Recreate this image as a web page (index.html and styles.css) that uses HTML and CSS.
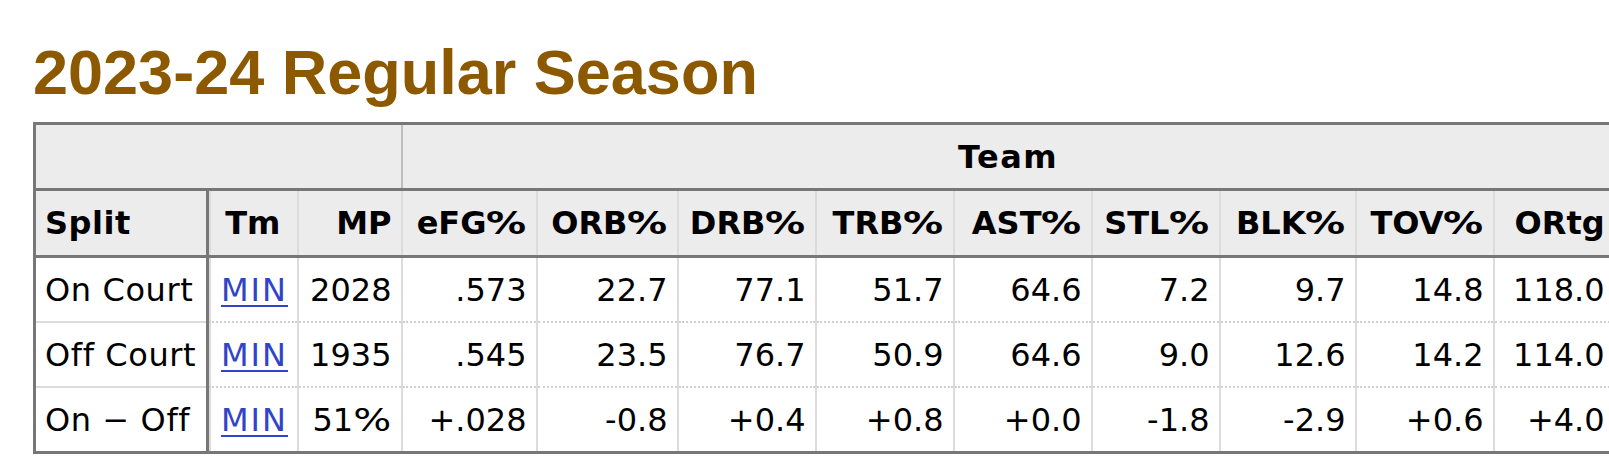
FILE: index.html
```html
<!DOCTYPE html>
<html lang="en">
<head>
<meta charset="utf-8">
<title>2023-24 Regular Season</title>
<link rel="stylesheet" href="styles.css">
</head>
<body>
<div class="page">
  <h2 class="title">2023-24 Regular Season</h2>
  <div class="table-wrap">
    <table class="stats">
      <colgroup>
        <col class="c-split"><col class="c-tm"><col class="c-mp">
        <col class="c-efg"><col class="c-orb"><col class="c-drb"><col class="c-trb">
        <col class="c-ast"><col class="c-stl"><col class="c-blk"><col class="c-tov"><col class="c-ortg">
      </colgroup>
      <thead>
        <tr class="over">
          <th colspan="3" class="blank"></th>
          <th colspan="9" class="group">Team</th>
        </tr>
        <tr class="heads">
          <th class="left split">Split</th>
          <th class="center tm">Tm</th>
          <th>MP</th>
          <th>eFG<span class="pct">%</span></th>
          <th>ORB<span class="pct">%</span></th>
          <th>DRB<span class="pct">%</span></th>
          <th>TRB<span class="pct">%</span></th>
          <th>AST<span class="pct">%</span></th>
          <th>STL<span class="pct">%</span></th>
          <th>BLK<span class="pct">%</span></th>
          <th>TOV<span class="pct">%</span></th>
          <th>ORtg</th>
        </tr>
      </thead>
      <tbody>
        <tr>
          <th class="left split">On Court</th>
          <td class="left tm"><a href="#">MIN</a></td>
          <td>2028</td><td>.573</td><td>22.7</td><td>77.1</td><td>51.7</td><td>64.6</td><td>7.2</td><td>9.7</td><td>14.8</td><td>118.0</td>
        </tr>
        <tr>
          <th class="left split">Off Court</th>
          <td class="left tm"><a href="#">MIN</a></td>
          <td>1935</td><td>.545</td><td>23.5</td><td>76.7</td><td>50.9</td><td>64.6</td><td>9.0</td><td>12.6</td><td>14.2</td><td>114.0</td>
        </tr>
        <tr>
          <th class="left split">On − Off</th>
          <td class="left tm"><a href="#">MIN</a></td>
          <td>51<span class="pct">%</span></td><td>+.028</td><td>-0.8</td><td>+0.4</td><td>+0.8</td><td>+0.0</td><td>-1.8</td><td>-2.9</td><td>+0.6</td><td>+4.0</td>
        </tr>
      </tbody>
    </table>
  </div>
</div>
</body>
</html>
```

FILE: styles.css
```css
html, body {
  margin: 0;
  padding: 0;
  background: #ffffff;
}

.page {
  padding: 36px 0 0 33px;
  overflow: hidden;
}

.title {
  margin: 0 0 14px 0;
  font-family: "Liberation Sans", Arial, sans-serif;
  font-weight: bold;
  font-size: 63px;
  line-height: 72px;
  color: #8c5800;
}

.table-wrap {
  overflow: hidden;
}

.stats {
  border-collapse: collapse;
  table-layout: fixed;
  width: 1580px;
  font-family: "DejaVu Sans", Verdana, sans-serif;
  font-size: 32px;
  color: #000;
  border-top: 3px solid #777;
  border-left: 3px solid #777;
  border-bottom: 3px solid #777;
}

.c-split { width: 173px; }
.c-tm { width: 90px; }
.c-mp { width: 104px; }
.c-efg { width: 135px; }
.c-orb { width: 141px; }
.c-drb { width: 138px; }
.c-trb { width: 138px; }
.c-ast { width: 138px; }
.c-stl { width: 128px; }
.c-blk { width: 136px; }
.c-tov { width: 138px; }
.c-ortg { width: 121px; }

.stats th,
.stats td {
  height: 63px;
  padding: 0 9px;
  text-align: right;
  vertical-align: middle;
  white-space: nowrap;
  border-left: 2px solid #dcdcdc;
  border-right: 2px solid #dcdcdc;
}

.stats thead th {
  background: #ececec;
  font-weight: bold;
}

.stats .over th {
  height: 63px;
}

.stats .heads th {
  height: 64px;
}

.stats .over .blank {
  border-right: 2px solid #bdbdbd;
}

.stats .over .group {
  text-align: center;
  letter-spacing: 1.5px;
}

.stats .heads th {
  border-top: 3px solid #777;
  border-bottom: 3px solid #777;
}

.pct {
  display: inline-block;
  margin-left: 4px;
  margin-right: 4px;
  transform: scaleX(1.25);
}

.stats tbody td {
  border-top: 2px dotted #cfcfcf;
}

.stats tbody th {
  font-weight: normal;
  background: #fff;
  border-top: 2px solid #dcdcdc;
  letter-spacing: 0.6px;
}

.stats tbody tr:first-child td,
.stats tbody tr:first-child th {
  border-top: 3px solid #777;
}

.stats .split {
  border-right: 3px solid #777;
}

.stats thead .split {
  letter-spacing: 0.5px;
}

.stats .tm {
  box-shadow: inset 2px 0 #dcdcdc;
}

.stats tbody .tm {
  padding-left: 12px;
}

.stats .left {
  text-align: left;
}

.stats .center {
  text-align: center;
}

.stats a {
  color: #3143c9;
  letter-spacing: 2px;
  text-decoration: underline;
  text-decoration-thickness: 2px;
  text-underline-offset: 4px;
}
```
